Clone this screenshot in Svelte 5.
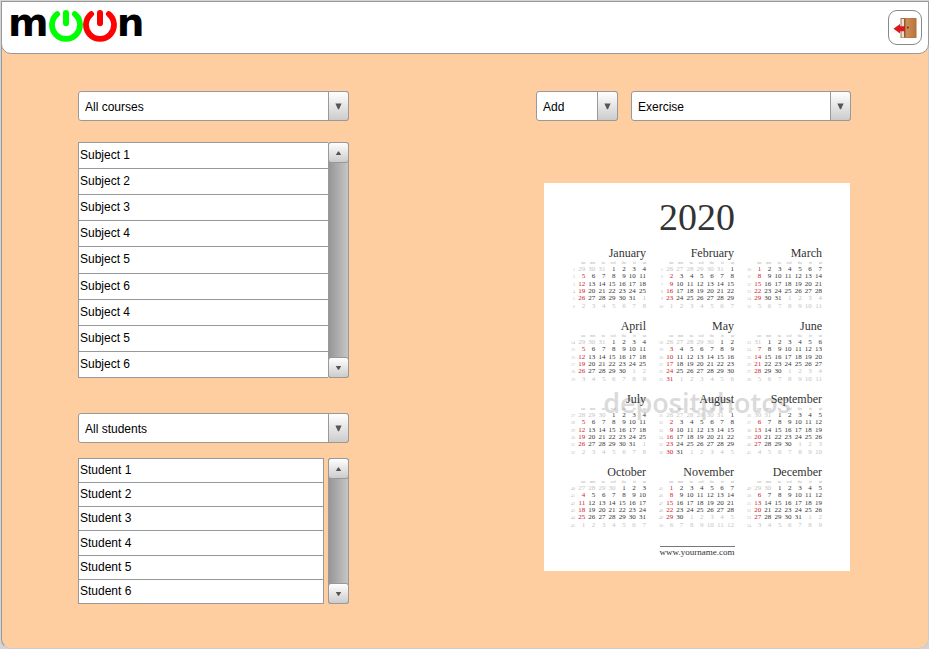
<script>
  const courses = ['All courses'];
  const students = ['All students'];
  const subjectRows = [1, 2, 3, 4, 5, 6, 4, 5, 6].map((n) => `Subject ${n}`);
  const studentRows = [1, 2, 3, 4, 5, 6].map((n) => `Student ${n}`);
  const year = 2020;
  const dayNames = ['sun', 'mon', 'tue', 'wed', 'thu', 'fri', 'sat'];
  const monthNames = [
    'January', 'February', 'March', 'April', 'May', 'June',
    'July', 'August', 'September', 'October', 'November', 'December'
  ];
  const DAY = 86400000;

  // Six full weeks per month, Sunday first, padded with the neighbouring months' days.
  const months = monthNames.map((name, m) => {
    const first = Date.UTC(year, m, 1);
    const start = first - new Date(first).getUTCDay() * DAY;
    const weeks = Array.from({ length: 6 }, (_, w) => {
      const sunday = start + w * 7 * DAY;
      const number = Math.floor((sunday - Date.UTC(year - 1, 11, 29)) / (7 * DAY)) + 1;
      const days = Array.from({ length: 7 }, (_, d) => {
        const date = new Date(sunday + d * DAY);
        return { date: date.getUTCDate(), outside: date.getUTCMonth() !== m };
      });
      return { number, days };
    });
    return { name, weeks };
  });
</script>

{#snippet dropdown(label, options, kind)}
  <div class="dropdown {kind}">
    <select aria-label={label}>
      {#each options as option}<option>{option}</option>{/each}
    </select>
    <span class="arrow" aria-hidden="true">
      <svg width="7" height="7" viewBox="0 0 7 7"><path d="M0.4 0.5H6.6L4 6.3H3Z" fill="#555" /></svg>
    </span>
  </div>
{/snippet}

{#snippet scroller()}
  <div class="scroller">
    <button type="button" aria-label="Scroll up">
      <svg width="7" height="4" viewBox="0 0 7 4"><path d="M0.8 4H6.2L4 0.4H3Z" fill="#555" /></svg>
    </button>
    <button type="button" aria-label="Scroll down">
      <svg width="7" height="4" viewBox="0 0 7 4"><path d="M0.8 0H6.2L4 3.8H3Z" fill="#555" /></svg>
    </button>
  </div>
{/snippet}

{#snippet power(color)}
  <svg width="34" height="34" viewBox="0 0 34 34" fill="none" stroke={color} stroke-width="5.8" stroke-linecap="round" aria-hidden="true">
    <path d="M8.2 4A14 14 0 1 0 25.8 4" />
    <path d="M17 3V13.2" stroke-width="6" />
  </svg>
{/snippet}

<div class="app">
  <header>
    <div class="logo" role="img" aria-label="moon">
      <span>m</span>{@render power('#00ff00')}{@render power('#ff0000')}<span>n</span>
    </div>
    <button class="exit" type="button" aria-label="Exit">
      <svg width="26" height="24" viewBox="0 0 26 24" aria-hidden="true">
        <defs>
          <linearGradient id="door" x1="0" x2="1"><stop stop-color="#cf9058" /><stop offset="1" stop-color="#b9773f" /></linearGradient>
        </defs>
        <rect x="8.5" y="2" width="16" height="20" fill="#b0703a" />
        <path d="M9.5 3H13V21.5H9.5Z" fill="#dde2e4" />
        <path d="M12 2.5L14 3.5V21.5L12 21.5Z" fill="#94592b" />
        <rect x="13.5" y="2.5" width="10" height="19" fill="url(#door)" />
        <circle cx="15.8" cy="11.5" r="1" fill="#6b3510" />
        <path d="M1.5 12.7L8 8V10.2H13V15.2H8V17.4Z" fill="#d8191d" />
      </svg>
    </button>
  </header>

  <main>
    <section class="lists">
      {@render dropdown('Courses', courses, 'full')}
      <div class="listbox subjects">
        <ul>{#each subjectRows as row}<li><button type="button">{row}</button></li>{/each}</ul>
        {@render scroller()}
      </div>
      {@render dropdown('Students', students, 'full')}
      <div class="listbox students">
        <ul>{#each studentRows as row}<li><button type="button">{row}</button></li>{/each}</ul>
        {@render scroller()}
      </div>
    </section>

    <section class="planner">
      <div class="actions">
        {@render dropdown('Action', ['Add'], 'short')}
        {@render dropdown('Item', ['Exercise'], 'full')}
      </div>
      <article class="calendar">
        <h1>{year}</h1>
        <div class="months">
          {#each months as month}
            <table>
              <caption>{month.name}</caption>
              <thead>
                <tr><th></th>{#each dayNames as day}<th>{day}</th>{/each}</tr>
              </thead>
              <tbody>
                {#each month.weeks as week}
                  <tr>
                    <th>{week.number}</th>
                    {#each week.days as day, i}
                      <td class:sunday={i === 0} class:outside={day.outside}>{day.date}</td>
                    {/each}
                  </tr>
                {/each}
              </tbody>
            </table>
          {/each}
        </div>
        <p class="site">www.yourname.com</p>
        <span class="watermark">depositphotos</span>
      </article>
    </section>
  </main>
</div>

<style>
  :global(body) {
    background: #d4d4d4;
    font-family: 'Liberation Sans', Arial, sans-serif;
    font-size: 12px;
    color: #000;
  }
  :global(#app) {
    padding: 1px 0 0 1px;
  }
  .app, .app * {
    box-sizing: border-box;
  }
  .app {
    min-height: calc(100vh - 1px);
    background: #fecea0;
    border: 1px solid #ccc;
    border-left-color: #999;
    border-top-color: #999;
    border-radius: 0 0 10px 10px;
  }
  header {
    display: flex;
    justify-content: space-between;
    align-items: flex-start;
    height: 53px;
    margin: -1px -1px 0;
    padding: 8px 6px 0 6px;
    background: #fff;
    border: 1px solid #999;
    border-radius: 0 0 10px 10px;
  }
  .logo {
    display: flex;
    align-items: flex-start;
    font: bold 39px/34px 'DejaVu Sans', sans-serif;
    height: 34px;
  }
  .logo span {
    margin-top: -4px;
  }
  .exit {
    display: grid;
    place-items: center;
    width: 34px;
    height: 35px;
    padding: 0;
    background: #fff;
    border: 1px solid #888;
    border-radius: 9px;
  }
  main {
    display: flex;
    justify-content: space-between;
    align-items: flex-start;
    padding: 37px 77px 44px 76px;
  }
  .lists {
    width: 271px;
  }
  .planner {
    width: 315px;
  }
  .dropdown {
    position: relative;
    height: 30px;
  }
  .full {
    flex: 1;
  }
  .short {
    width: 82px;
  }
  select {
    appearance: none;
    width: 100%;
    height: 100%;
    margin: 0;
    padding: 1px 24px 0 6px;
    border: 1px solid #999;
    border-radius: 3px;
    background: #fff;
    font: inherit;
    color: inherit;
  }
  .arrow {
    position: absolute;
    inset: 0 0 0 auto;
    width: 21px;
    display: grid;
    place-items: center;
    border: 1px solid #999;
    border-radius: 0 3px 3px 0;
    background: linear-gradient(#fff, #ccc);
    pointer-events: none;
  }
  .listbox {
    display: flex;
  }
  .subjects {
    height: 236px;
    margin: 21px 0 35px;
  }
  .students {
    height: 146px;
    margin-top: 15px;
    gap: 4px;
  }
  ul {
    flex: 1;
    display: grid;
    grid-auto-rows: 1fr;
    margin: 0;
    padding: 0;
    list-style: none;
    background: #fff;
    border: 1px solid #999;
    border-bottom: 0;
  }
  .subjects ul {
    border-right: 0;
  }
  li {
    display: flex;
    min-height: 0;
    border-bottom: 1px solid #999;
  }
  li button {
    flex: 1;
    padding: 0 1px 1px;
    border: 0;
    background: none;
    font: inherit;
    color: inherit;
    text-align: left;
  }
  .scroller {
    display: flex;
    flex-direction: column;
    justify-content: space-between;
    width: 21px;
    background: linear-gradient(90deg, #969696, #c6c6c6);
    border: 1px solid #999;
    border-width: 0 1px;
    border-radius: 3px;
  }
  .scroller button {
    display: grid;
    place-items: center;
    height: 21px;
    margin: 0 -1px;
    padding: 0;
    border: 1px solid #999;
    border-radius: 3px;
    background: linear-gradient(#fff, #ccc);
  }
  .actions {
    display: flex;
    gap: 13px;
  }
  .calendar {
    position: relative;
    width: 306px;
    height: 388px;
    margin: 62px 0 0 8px;
    padding-top: 16px;
    background: #fff;
    font-family: 'Liberation Serif', 'Times New Roman', serif;
    color: #333;
  }
  h1 {
    margin: 0 0 11px;
    font-size: 38px;
    line-height: 36px;
    font-weight: normal;
    text-align: center;
  }
  .months {
    display: grid;
    grid-template-columns: repeat(3, 1fr);
    gap: 9px 10px;
    margin: 0 28px 0 24px;
  }
  table {
    position: relative;
    z-index: 1;
    display: block;
    font-size: 7px;
    line-height: 7px;
    text-align: right;
  }
  caption {
    display: block;
    font-size: 12px;
    line-height: 14px;
    text-align: right;
  }
  thead {
    display: block;
    height: 6px;
    font-size: 3px;
    color: #aaa;
  }
  tbody {
    display: grid;
    grid-auto-rows: 1fr;
    height: 44px;
  }
  tr {
    display: grid;
    grid-template-columns: 7px repeat(7, 1fr);
  }
  th, td {
    padding: 0;
    font-weight: normal;
    text-align: right;
  }
  tbody th {
    font-size: 4px;
    color: #bbb;
  }
  .sunday {
    color: #d0202c;
  }
  .outside {
    color: #c4c4c4;
  }
  .site {
    width: 75px;
    margin: 17px auto 0;
    border-top: 1px solid #777;
    font-size: 9px;
    line-height: 11px;
    text-align: center;
  }
  .watermark {
    position: absolute;
    top: 203px;
    left: 0;
    width: 100%;
    font: 600 27px/34px 'Open Sans', sans-serif;
    text-align: center;
    color: #dadada;
  }
</style>
